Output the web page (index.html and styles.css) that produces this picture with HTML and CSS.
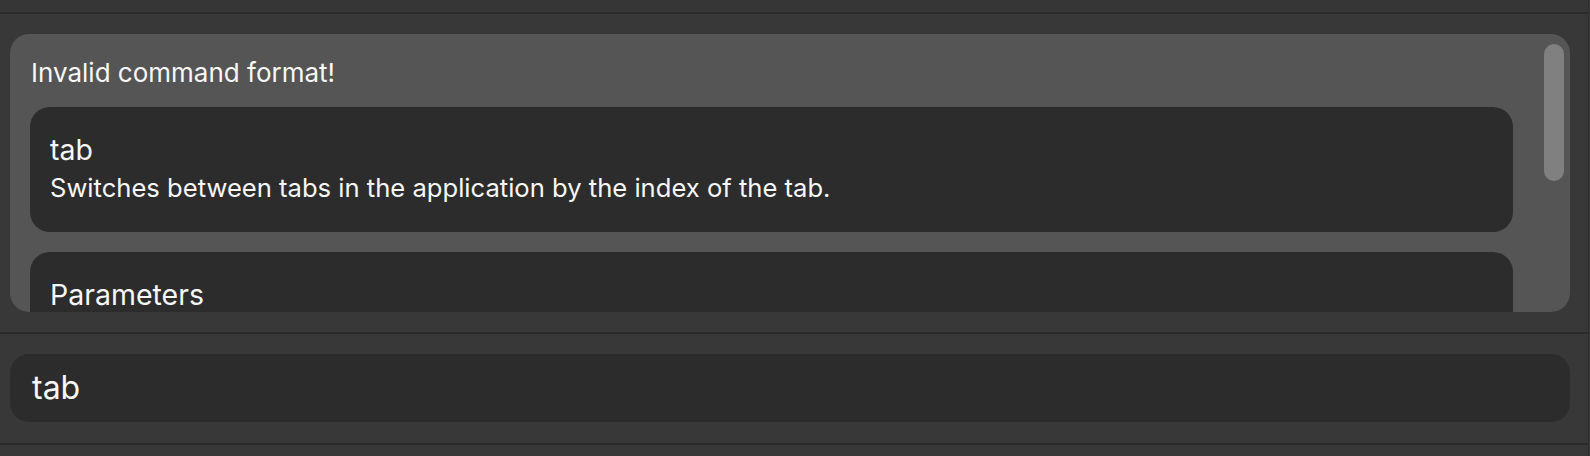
FILE: index.html
```html
<!DOCTYPE html>
<html>
<head>
<meta charset="utf-8">
<link rel="stylesheet" href="styles.css">
</head>
<body>
<div class="window">
  <div class="main">
    <div class="top-strip"></div>
    <div class="divider"></div>
    <div class="result-area">
      <div class="result-panel">
        <div class="result-content">
          <div class="message">Invalid command format!</div>
          <div class="card">
            <div class="card-title">tab</div>
            <div class="card-text">Switches between tabs in the application by the index of the tab.</div>
          </div>
          <div class="card card-tall">
            <div class="card-title">Parameters</div>
          </div>
        </div>
        <div class="scroll-thumb"></div>
      </div>
    </div>
    <div class="divider"></div>
    <div class="input-area">
      <div class="command-input">tab</div>
    </div>
    <div class="divider"></div>
  </div>
  <div class="edge"></div>
</div>
</body>
</html>
```
FILE: styles.css
```css
html, body {
  margin: 0;
  height: 100%;
  background: #383838;
}
body {
  font-family: Inter, "Noto Sans", sans-serif;
  color: #f7f7f7;
  overflow: hidden;
}
.window {
  display: flex;
  height: 456px;
}
.main {
  flex: 1;
  display: flex;
  flex-direction: column;
}
.edge {
  width: 2px;
  border-left: 1px solid #2e2e2e;
  box-sizing: border-box;
  background: #3a3a3a;
}
.top-strip {
  height: 12px;
  background: #363636;
}
.divider {
  height: 2px;
  background: #2a2a2a;
  flex: none;
}
.result-area {
  padding: 20px 18px 20px 10px;
}
.result-panel {
  position: relative;
  height: 278px;
  background: #555555;
  border-radius: 19px;
  overflow: hidden;
}
.result-content {
  padding: 23px 57px 0 20px;
  display: flex;
  flex-direction: column;
  gap: 20px;
}
.message {
  font-size: 26px;
  line-height: 32px;
  padding-left: 1px;
  margin-bottom: -2px;
}
.card {
  background: #2c2c2c;
  border-radius: 20px;
  padding: 26px 20px 28px 20px;
  display: flex;
  flex-direction: column;
  gap: 5px;
}
.card-tall {
  min-height: 120px;
}
.card-title {
  font-size: 28.5px;
  line-height: 34px;
}
.card-text {
  font-size: 25.6px;
  line-height: 32px;
}
.scroll-thumb {
  position: absolute;
  top: 10px;
  right: 6px;
  width: 20px;
  height: 137px;
  border-radius: 10px;
  background: #808080;
}
.input-area {
  padding: 20px 18px 21px 10px;
}
.command-input {
  height: 68px;
  line-height: 68px;
  background: #2c2c2c;
  border-radius: 19px;
  padding-left: 22px;
  font-size: 32px;
}
```
